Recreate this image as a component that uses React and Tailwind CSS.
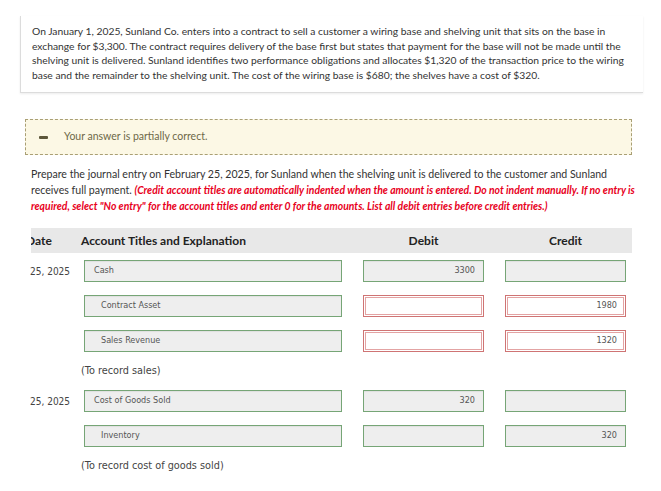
const rows = [
  { date: "25, 2025", account: "Cash", indent: false, debit: "3300", credit: "", debitBad: false, creditBad: false },
  { date: "", account: "Contract Asset", indent: true, debit: "", credit: "1980", debitBad: true, creditBad: true },
  { date: "", account: "Sales Revenue", indent: true, debit: "", credit: "1320", debitBad: true, creditBad: true, memo: "(To record sales)" },
  { date: "25, 2025", account: "Cost of Goods Sold", indent: false, debit: "320", credit: "", debitBad: false, creditBad: false },
  { date: "", account: "Inventory", indent: true, debit: "", credit: "320", debitBad: false, creditBad: false, memo: "(To record cost of goods sold)" },
];

const Field = ({ value, bad, right, indent, wide }) => (
  <div
    className={`h-[22px] flex items-center text-[9px] text-[#555] font-['DejaVu_Sans_Condensed','DejaVu_Sans',sans-serif] ${
      wide ? "w-[258px]" : "w-[121px]"
    } ${right ? "justify-end pr-[8px]" : indent ? "pl-[16px]" : "pl-[9px]"} ${
      bad
        ? "bg-white border border-[#cf7474] shadow-[inset_0_0_0_1px_#fff,inset_0_0_0_2px_#e3a3a3]"
        : "bg-[#eeeeee] border border-[#76a576] shadow-[inset_0_1px_1px_rgba(0,0,0,0.06)]"
    }`}
  >
    {value}
  </div>
);

export default function App() {
  return (
    <div className="w-[661px] h-[491px] bg-white overflow-hidden font-['Lato',sans-serif] text-[#333]">
      {/* problem statement */}
      <div className="ml-[20px] mt-[16px] w-[623px] bg-white border-l border-b border-[#dcdcdc] shadow-[0_1px_2px_rgba(0,0,0,0.08)] pl-[11px] pr-[8px] pt-[8px] pb-[10px] text-[10.3px] leading-[14.5px]">
        On January 1, 2025, Sunland Co. enters into a contract to sell a customer a wiring base and shelving unit that sits on the base in exchange for $3,300. The contract requires delivery of the base first but states that payment for the base will not be made until the shelving unit is delivered. Sunland identifies two performance obligations and allocates $1,320 of the transaction price to the wiring base and the remainder to the shelving unit. The cost of the wiring base is $680; the shelves have a cost of $320.
      </div>

      {/* feedback */}
      <div className="ml-[25px] mt-[26px] w-[607px] h-[36px] flex items-center bg-[#fcf8e5] border border-dashed border-[#a99f74] text-[10.5px] text-[#6e6848]">
        <span className="ml-[13px] w-[9px] h-[3px] bg-[#5d573a] rounded-[1px]" />
        <span className="ml-[16px]">Your answer is partially correct.</span>
      </div>

      {/* instructions */}
      <div className="ml-[31px] mt-[11px] w-[606px] text-[10.6px] leading-[16px]">
        Prepare the journal entry on February 25, 2025, for Sunland when the shelving unit is delivered to the customer and Sunland receives full payment.{" "}
        <span className="text-[#e8001c] text-[10.4px] font-bold italic">
          (Credit account titles are automatically indented when the amount is entered. Do not indent manually. If no entry is required, select "No entry" for the account titles and enter 0 for the amounts. List all debit entries before credit entries.)
        </span>
      </div>

      {/* journal table */}
      <div className="ml-[31px] mt-[14px] w-[601px]">
        <div className="h-[25px] flex items-center bg-[#e8e8e8] text-[12px] font-bold text-[#222]">
          <div className="w-[50px] overflow-hidden whitespace-nowrap">
            <span className="ml-[-5px]">Date</span>
          </div>
          <div className="w-[282px]">Account Titles and Explanation</div>
          <div className="w-[121px] text-center">Debit</div>
          <div className="w-[21px]" />
          <div className="w-[121px] text-center">Credit</div>
        </div>

        {rows.map((r, i) => (
          <div key={i}>
            <div className={`flex items-center ${i === 0 ? "mt-[7px]" : i === 3 ? "mt-[11px]" : "mt-[13px]"}`}>
              <div className="w-[50px] ml-[-1px] mr-[1px] whitespace-nowrap text-[10px] text-[#444] font-['DejaVu_Sans_Condensed','DejaVu_Sans',sans-serif]">
                {r.date}
              </div>
              <div className="w-[282px] pl-[3px]">
                <Field value={r.account} indent={r.indent} wide />
              </div>
              <Field value={r.debit} bad={r.debitBad} right />
              <div className="w-[21px]" />
              <Field value={r.credit} bad={r.creditBad} right />
            </div>
            {r.memo && (
              <div className="ml-[50px] mt-[11px] text-[10.8px] leading-[16px] text-[#444] font-['DejaVu_Sans_Condensed','DejaVu_Sans',sans-serif]">
                {r.memo}
              </div>
            )}
          </div>
        ))}
      </div>
    </div>
  );
}
